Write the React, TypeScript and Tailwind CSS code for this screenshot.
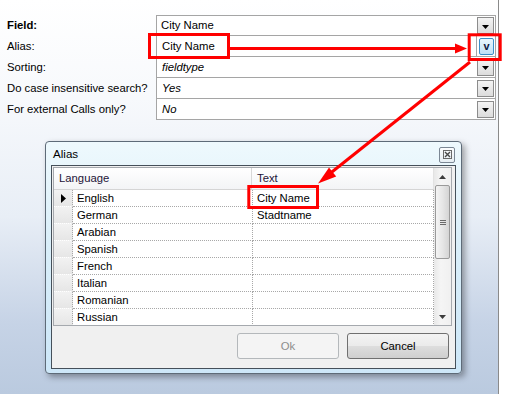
import React from "react";

const font = { fontFamily: '"Liberation Sans", Arial, sans-serif' };

function DropBtn() {
  return (
    <div className="w-[17px] h-[17px] mr-[1px] border border-[#8c8c8c] bg-[linear-gradient(to_bottom,#f4f4f4,#dcdcdc)] flex items-center justify-center pt-[2px]">
      <svg width="7" height="4" viewBox="0 0 7 4">
        <path d="M0 0H7L3.5 4Z" fill="#000" />
      </svg>
    </div>
  );
}

type Row = { label: string; value: string; bold?: boolean; italic?: boolean; alias?: boolean };

const rows: Row[] = [
  { label: "Field:", value: "City Name", bold: true },
  { label: "Alias:", value: "City Name", alias: true },
  { label: "Sorting:", value: "fieldtype", italic: true },
  { label: "Do case insensitive search?", value: "Yes", italic: true },
  { label: "For external Calls only?", value: "No", italic: true },
];

const langs = ["English", "German", "Arabian", "Spanish", "French", "Italian", "Romanian", "Russian"];
const texts: Record<string, string> = { English: "City Name", German: "Stadtname" };

function PropRow({ r, first }: { r: Row; first: boolean }) {
  return (
    <div className="flex h-[21px]">
      <div
        className={
          r.bold
            ? "w-[156px] pl-[7px] flex items-center text-[11.3px] text-black font-bold"
            : "w-[156px] pl-[7px] flex items-center text-[11.3px] text-black"
        }
      >
        {r.label}
      </div>
      <div
        className={
          first
            ? "flex-1 flex items-center bg-white border border-[#a5a5a5]"
            : "flex-1 flex items-center bg-white border-x border-b border-[#a5a5a5]"
        }
      >
        {r.alias ? (
          <>
            <div className="flex-1 h-full border-r border-[#a5a5a5] flex items-center pl-[5px] text-[11.3px] text-black">
              {r.value}
            </div>
            <div className="w-[15px] h-[17px] ml-[2px] mr-[1px] rounded-[2px] border border-[#3c8fc7] bg-[linear-gradient(to_bottom,#eaf6fd,#bfe2f7)] flex items-center justify-center text-[11px] font-bold text-[#101840] leading-none">
              v
            </div>
          </>
        ) : (
          <>
            <div
              className={
                r.italic
                  ? "flex-1 pl-[5px] text-[11.3px] italic text-black"
                  : "flex-1 pl-[4px] text-[11.3px] text-black"
              }
            >
              {r.value}
            </div>
            <DropBtn />
          </>
        )}
      </div>
    </div>
  );
}

function Dialog() {
  return (
    <div className="absolute left-[45px] top-[141px] w-[417px] h-[233px] border border-[#5e6b78] rounded-[4px] bg-[linear-gradient(to_bottom,#eef9fd,#d9eef9_45%,#cde7f8)] shadow-[3px_3px_6px_rgba(0,0,0,0.35)] flex flex-col px-[5px] pb-[4px]">
      <div className="h-[23px] flex items-center justify-between pl-[2px] pr-[1px]">
        <span className="text-[11.6px] text-black">Alias</span>
        <div className="w-[16px] h-[16px] mt-[2px] rounded-[2px] border border-[#7b8794] bg-[linear-gradient(to_bottom,#fbfdfe,#e6eef3)] flex items-center justify-center">
          <svg width="9" height="9" viewBox="0 0 9 9">
            <rect x="0.5" y="0.5" width="8" height="8" fill="none" stroke="#6a6a6a" strokeWidth="1" />
            <path d="M2 2L7 7M7 2L2 7" stroke="#4a4a4a" strokeWidth="1.4" />
          </svg>
        </div>
      </div>
      <div className="flex-1 border border-[#45505a] bg-[#f0f0f0] flex flex-col pl-[1px] pt-[1px] pr-[2px]">
        {/* grid */}
        <div className="w-[399px] h-[159px] border border-[#a5a9ae] bg-white flex overflow-hidden">
          <div className="w-[380px] flex flex-col">
            <div className="h-[22px] flex border-b border-[#d5d5d5] bg-[linear-gradient(to_bottom,#ffffff,#f3f4f6)] shrink-0">
              <div className="w-[198px] border-r border-[#d8d8d8] flex items-center pl-[5px] text-[11.3px] text-[#1e1438]">
                Language
              </div>
              <div className="flex-1 flex items-center pl-[5px] text-[11.3px] text-[#1e1438] border-r border-[#e2e2e2]">
                Text
              </div>
            </div>
            {langs.map((l, i) => (
              <div key={l} className="h-[17px] flex shrink-0">
                <div className="w-[19px] bg-[linear-gradient(to_bottom,#f2f2f2,#e6e6e6)] border-b border-white border-r border-r-[#a8a8a8] border-dotted flex items-center justify-center">
                  {i === 0 ? (
                    <svg width="5" height="9" viewBox="0 0 5 9">
                      <path d="M0 0L5 4.5L0 9Z" fill="#000" />
                    </svg>
                  ) : null}
                </div>
                <div className="w-[180px] border-b border-r border-dotted border-[#a8a8a8] flex items-center pl-[4px] text-[11.3px] text-black">
                  {l}
                </div>
                <div className="flex-1 border-b border-r border-dotted border-[#a8a8a8] flex items-center pl-[4px] text-[11.3px] text-black">
                  {texts[l] ?? ""}
                </div>
              </div>
            ))}
          </div>
          {/* scrollbar */}
          <div className="w-[17px] flex flex-col bg-[linear-gradient(to_right,#e8e8e8,#f5f5f5_40%,#f0f0f0)]">
            <div className="h-[17px] flex items-center justify-center">
              <svg width="7" height="4" viewBox="0 0 7 4">
                <path d="M3.5 0L7 4H0Z" fill="#3c3c3c" />
              </svg>
            </div>
            <div className="h-[74px] mx-[1px] rounded-[2px] border border-[#9a9a9a] bg-[linear-gradient(to_right,#f4f4f4,#e6e6e6_50%,#d4d4d4)] flex flex-col items-center justify-center gap-[1px]">
              <div className="w-[6px] h-[1px] bg-[#6a6a6a]" />
              <div className="w-[6px] h-[1px] bg-[#6a6a6a]" />
              <div className="w-[6px] h-[1px] bg-[#6a6a6a]" />
            </div>
            <div className="flex-1" />
            <div className="h-[17px] flex items-center justify-center">
              <svg width="7" height="4" viewBox="0 0 7 4">
                <path d="M0 0H7L3.5 4Z" fill="#3c3c3c" />
              </svg>
            </div>
          </div>
        </div>
        {/* buttons */}
        <div className="flex justify-end gap-[8px] mt-[7px] pr-[4px]">
          <div className="w-[102px] h-[26px] rounded-[3px] border border-[#b4b8bb] bg-[#f4f4f4] flex items-center justify-center text-[11.3px] text-[#8d8d8d]">
            Ok
          </div>
          <div className="w-[102px] h-[26px] rounded-[3px] border border-[#707070] bg-[linear-gradient(to_bottom,#f3f3f3,#ebebeb_48%,#dddddd_52%,#cfcfcf)] flex items-center justify-center text-[11.3px] text-black">
            Cancel
          </div>
        </div>
      </div>
    </div>
  );
}

function Overlay() {
  return (
    <svg className="absolute left-0 top-0 pointer-events-none" width="507" height="394" viewBox="0 0 507 394">
      <rect x="149.5" y="34.5" width="79" height="23" fill="none" stroke="#ff0000" strokeWidth="3" />
      <rect x="469.2" y="34.8" width="31" height="24.7" fill="none" stroke="#ff0000" strokeWidth="3" />
      <rect x="248.8" y="186.5" width="68.7" height="21" fill="none" stroke="#ff0000" strokeWidth="3" />
      <line x1="230" y1="48.5" x2="457" y2="48.5" stroke="#ff0000" strokeWidth="3" />
      <path d="M455 43.5L467 48.5L455 53.5Z" fill="#ff0000" />
      <line x1="470" y1="62" x2="330" y2="173.5" stroke="#ff0000" strokeWidth="3" />
      <path d="M318 183.5L336.2 176.5L329 167.5Z" fill="#ff0000" />
    </svg>
  );
}

export default function App() {
  return (
    <div className="relative w-[507px] h-[394px] overflow-hidden flex bg-white" style={font}>
      <div className="w-[499px] h-full shrink-0 border-r border-[#8a8a8a] bg-[linear-gradient(to_bottom,#ffffff_0%,#f7f9fc_25%,#e8eef6_55%,#c6d3e6_82%,#bacadf_100%)] pt-[15px] pr-[2px]">
        <div className="flex flex-col">
          {rows.map((r, i) => (
            <PropRow key={r.label} r={r} first={i === 0} />
          ))}
        </div>
      </div>
      <div className="flex-1 bg-white" />
      <Dialog />
      <Overlay />
    </div>
  );
}
